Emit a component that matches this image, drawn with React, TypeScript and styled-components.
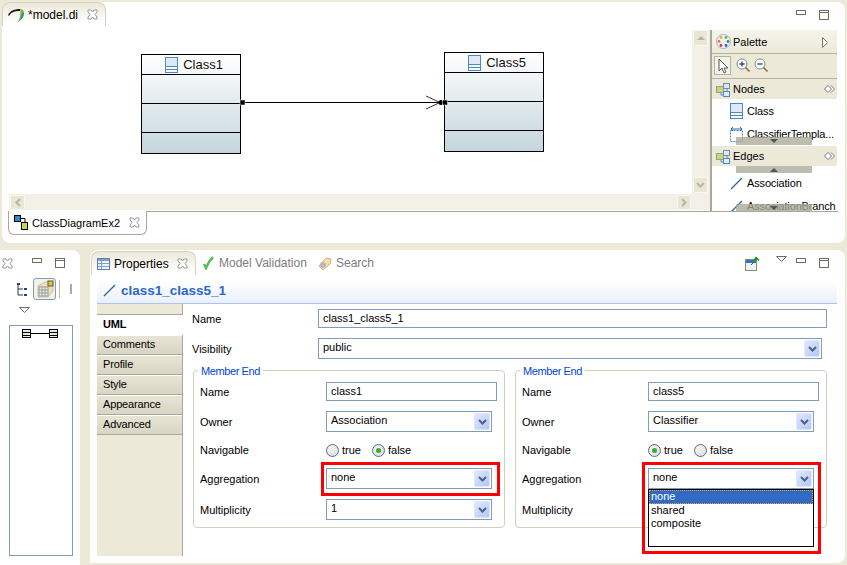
import React from "react";
import styled, { createGlobalStyle, css } from "styled-components";

const Global = createGlobalStyle`
  html, body { margin: 0; padding: 0; background: #ece9d8; }
  body { width: 847px; height: 565px; overflow: hidden; font-family: "Liberation Sans", Arial, sans-serif; font-size: 11px; color: #000; }
  * { box-sizing: border-box; }
`;

type Box = { $x: number; $y: number; $w?: number; $h?: number };
const place = css<Box>`
  position: absolute;
  left: ${(p) => p.$x}px;
  top: ${(p) => p.$y}px;
  ${(p) => (p.$w !== undefined ? `width: ${p.$w}px;` : "")}
  ${(p) => (p.$h !== undefined ? `height: ${p.$h}px;` : "")}
`;

const Page = styled.div`
  position: relative;
  width: 847px;
  height: 565px;
  background: #ece9d8;
  overflow: hidden;
`;
const Panel = styled.div<Box & { $radius: string }>`
  ${place}
  background: #fff;
  border-radius: ${(p) => p.$radius};
`;
const ViewTab = styled.div<Box & { $muted?: boolean }>`
  ${place}
  display: flex;
  align-items: center;
  gap: 4px;
  font-size: 12px;
  color: ${(p) => (p.$muted ? "#7d7d7d" : "#000")};
  white-space: nowrap;
`;
const ActiveTab = styled(ViewTab)`
  background: linear-gradient(#ece9d8, #fff 90%);
  border: 1px solid #d5d2c2;
  border-bottom: 0;
  border-radius: 8px 8px 0 0;
  padding-left: 5px;
`;
const BottomTab = styled(ViewTab)`
  background: #fff;
  border: 1px solid #aca899;
  border-top: 0;
  border-radius: 0 0 6px 6px;
  padding-left: 5px;
  gap: 3px;
  font-size: 11px;
`;
const TabClose = styled.span<{ $gap: number }>`
  display: flex;
  margin-left: ${(p) => p.$gap}px;
`;
const Rule = styled.div<Box & { $color: string }>`
  ${place}
  background: ${(p) => p.$color};
`;

const ClassBox = styled.div<Box>`
  ${place}
  width: 100px;
  height: 100px;
  border: 1px solid #000;
  background: linear-gradient(#fff, #c4d6dc);
`;
const ClassHead = styled.div`
  position: absolute;
  left: 0;
  right: 0;
  top: 0;
  height: 20px;
  border-bottom: 1px solid #000;
  display: flex;
  align-items: center;
  justify-content: center;
  gap: 5px;
  padding-left: 6px;
  color: #111;
  font-size: 13px;
`;
const ClassLine = styled.div<{ $top: number }>`
  position: absolute;
  left: 0;
  right: 0;
  top: ${(p) => p.$top}px;
  height: 1px;
  background: #000;
`;
const Drawing = styled.svg<Box>`
  ${place}
  display: block;
  overflow: visible;
`;

const ScrollTrack = styled.div<Box>`
  ${place}
  background: #f3f1e7;
`;
const ScrollButton = styled.div<Box>`
  ${place}
  background: #e9e6d6;
  border: 1px solid #f8f7f0;
  border-radius: 2px;
  display: flex;
  align-items: center;
  justify-content: center;
`;

const PaletteBar = styled.div<Box & { $bg: string }>`
  ${place}
  background: ${(p) => p.$bg};
  display: flex;
  align-items: center;
  gap: 2px;
  padding-left: 4px;
  font-size: 11px;
`;
const PaletteItem = styled.div<Box>`
  ${place}
  display: flex;
  align-items: center;
  gap: 4px;
  font-size: 11px;
  letter-spacing: -0.15px;
  white-space: nowrap;
`;
const PaletteScroll = styled.div<Box>`
  ${place}
  background: rgba(172, 168, 153, 0.78);
  display: flex;
  align-items: center;
  justify-content: center;
`;
const Tri = styled.div<{ $up?: boolean; $color?: string }>`
  width: 0;
  height: 0;
  border-left: 4px solid transparent;
  border-right: 4px solid transparent;
  ${(p) => (p.$up ? `border-bottom: 4px solid ${p.$color || "#555"};` : `border-top: 4px solid ${p.$color || "#555"};`)}
`;

const TitleBar = styled.div<Box>`
  ${place}
  background: linear-gradient(#fff 15%, #e9f0fb);
  border-bottom: 1px solid #a9c5f0;
  display: flex;
  align-items: center;
  gap: 5px;
  padding-left: 6px;
  color: #2c66c4;
  font-weight: 700;
  font-size: 13.5px;
`;
const SideTabs = styled.div<Box>`
  ${place}
  background: #ece9d8;
  border-right: 1px solid #aca899;
  display: flex;
  flex-direction: column;
  padding-top: 10px;
`;
const SideTab = styled.div<{ $active?: boolean }>`
  height: 20px;
  padding: 0 0 3px 6px;
  display: flex;
  align-items: center;
  font-size: 11px;
  letter-spacing: -0.15px;
  color: #000;
  ${(p) =>
    p.$active
      ? `background:#fff; font-weight:700; border-top:1px solid #aca899; height:21px; margin-right:-1px;`
      : `background: linear-gradient(#e7e4d3,#d8d5c4); border-top:1px solid #fff; border-bottom:1px solid #aca899;`}
`;
const SideFill = styled.div`
  flex: 1;
  background: #ece9d8;
`;
const Label = styled.div<Box>`
  ${place}
  font-size: 11px;
  line-height: 14px;
  white-space: nowrap;
`;
const TextField = styled.div<Box>`
  ${place}
  height: 19px;
  background: #fff;
  border: 1px solid #7f9db9;
  padding-left: 4px;
  font-size: 11px;
  line-height: 17px;
  white-space: nowrap;
`;
const ComboBox = styled.div<Box>`
  ${place}
  height: 21px;
  background: #fff;
  border: 1px solid #7f9db9;
  padding-left: 4px;
  font-size: 11px;
  line-height: 16px;
`;
const ComboButton = styled.div`
  position: absolute;
  right: 1px;
  top: 1px;
  width: 16px;
  height: 17px;
  background: linear-gradient(135deg, #e0e8fd, #b3c7f5);
  border: 1px solid #dfe7fb;
  border-radius: 2px;
  display: flex;
  align-items: center;
  justify-content: center;
`;
const GroupFrame = styled.div<Box>`
  ${place}
  border: 1px solid #d0d0bf;
  border-radius: 4px;
`;
const GroupTitle = styled.div`
  position: absolute;
  left: 4px;
  top: -7px;
  padding: 0 3px;
  background: #fff;
  color: #0046d5;
  font-size: 11px;
  line-height: 14px;
  letter-spacing: -0.4px;
`;
const RadioRow = styled.div<Box>`
  ${place}
  display: flex;
  align-items: center;
  gap: 3px;
  font-size: 11px;
  height: 14px;
`;
const RadioCircle = styled.div<{ $on?: boolean; $gap?: boolean }>`
  width: 13px;
  height: 13px;
  border-radius: 50%;
  border: 1px solid #4a6f96;
  background: radial-gradient(circle at 35% 30%, #f5f5f0, #dcdcd2);
  display: flex;
  align-items: center;
  justify-content: center;
  margin-left: ${(p) => (p.$gap ? "8px" : "0")};
  &::after {
    content: "";
    width: 5px;
    height: 5px;
    border-radius: 50%;
    background: ${(p) => (p.$on ? "#3aa83a" : "transparent")};
  }
`;
const RedFrame = styled.div<Box>`
  ${place}
  border: 3px solid #ff0000;
`;
const DropList = styled.div<Box>`
  ${place}
  background: #fff;
  border: 1px solid #000;
  font-size: 11px;
  line-height: 13px;
`;
const DropItem = styled.div<{ $selected?: boolean }>`
  height: 13px;
  padding-left: 2px;
  ${(p) => (p.$selected ? "background:#316ac5;color:#fff;outline:1px dotted #e8a33d;outline-offset:-1px;height:14px;" : "")}
`;
const OutlineBox = styled.div<Box>`
  ${place}
  border: 1px solid #7f9db9;
  background: #fff;
`;
const ToggleBtn = styled.div<Box>`
  ${place}
  border: 1px solid #7f9db9;
  border-radius: 3px;
  background: #f3f2ea;
`;

const ClassIcon = () => (
  <svg width="13" height="16" viewBox="0 0 13 16" style={{ flex: "none" }}>
    <rect x=".5" y=".5" width="12" height="15" fill="#f4f8fc" stroke="#4f87c0" />
    <rect x="1" y="1" width="11" height="8" fill="#dfe9f4" />
    <path d="M1 9.500h11M1 12.500h11" stroke="#4f87c0" />
  </svg>
);
const closePath = "M1 1l3 0 1.500 2L7 1h3v2L8 5.500l2 2.500v2H7L5.500 8 4 10H1V8l2-2.500L1 3z";
const Close = () => (
  <svg width="11" height="11" viewBox="0 0 11 11" style={{ flex: "none" }}>
    <path d={closePath} fill="#fff" stroke="#999" />
  </svg>
);
const Minimize = ({ x, y }: { x: number; y: number }) => (
  <Drawing $x={x} $y={y} $w={10} $h={5} viewBox="0 0 10 5">
    <rect x=".5" y=".5" width="9" height="4" fill="#fff" stroke="#6e6e5e" />
  </Drawing>
);
const Maximize = ({ x, y }: { x: number; y: number }) => (
  <Drawing $x={x} $y={y} $w={10} $h={10} viewBox="0 0 10 10">
    <rect x=".5" y=".5" width="9" height="9" fill="#fff" stroke="#6e6e5e" />
    <path d="M0 2.500h10" stroke="#6e6e5e" />
  </Drawing>
);
const ChevronDown = ({ color = "#4d6185" }: { color?: string }) => (
  <svg width="9" height="6" viewBox="0 0 9 6">
    <path d="M1 1l3.500 3.500L8 1" fill="none" stroke={color} strokeWidth="2" />
  </svg>
);
const ChevronSide = ({ left }: { left?: boolean }) => (
  <svg width="6" height="9" viewBox="0 0 6 9">
    <path d={left ? "M5 1L1.500 4.500 5 8" : "M1 1l3.500 3.500L1 8"} fill="none" stroke="#b8b5a6" strokeWidth="2" />
  </svg>
);
const FolderPair = () => (
  <svg width="15" height="15" viewBox="0 0 15 15" style={{ flex: "none" }}>
    <path d="M11 6v3M5 10v3h3" fill="none" stroke="#4f87c0" />
    <rect x=".5" y="4.500" width="7" height="6" fill="#c9d86a" stroke="#8aa0a0" />
    <rect x="7.500" y="1.500" width="6" height="5" fill="#dfe9f4" stroke="#6a90b5" />
    <rect x="7.500" y="9.500" width="6" height="5" fill="#dfe9f4" stroke="#4f87c0" />
  </svg>
);
const LineIcon = () => (
  <svg width="13" height="13" viewBox="0 0 13 13" style={{ flex: "none" }}>
    <path d="M1 12L12 1" stroke="#2a62a8" strokeWidth="1.200" />
  </svg>
);
const Combo = ({ x, y, w, text }: { x: number; y: number; w: number; text: string }) => (
  <ComboBox $x={x} $y={y} $w={w}>
    {text}
    <ComboButton>
      <ChevronDown />
    </ComboButton>
  </ComboBox>
);

const MemberEnd = ({ x, name, owner, nav, multiplicity }: { x: number; name: string; owner: string; nav: boolean; multiplicity?: string }) => (
  <>
    <GroupFrame $x={x} $y={370} $w={312} $h={158}>
      <GroupTitle>Member End</GroupTitle>
    </GroupFrame>
    <Label $x={x + 7} $y={385}>Name</Label>
    <TextField $x={x + 133} $y={382} $w={171}>{name}</TextField>
    <Label $x={x + 7} $y={415}>Owner</Label>
    <Combo x={x + 133} y={411} w={166} text={owner} />
    <Label $x={x + 7} $y={443}>Navigable</Label>
    <RadioRow $x={x + 133} $y={443}>
      <RadioCircle $on={nav} /> true
      <RadioCircle $on={!nav} $gap /> false
    </RadioRow>
    <Label $x={x + 7} $y={472}>Aggregation</Label>
    <Combo x={x + 133} y={468} w={166} text="none" />
    <Label $x={x + 7} $y={503}>Multiplicity</Label>
    {multiplicity && <Combo x={x + 133} y={499} w={166} text={multiplicity} />}
  </>
);

const Diamonds = ({ y }: { y: number }) => (
  <Drawing $x={824} $y={y} $w={11} $h={8} viewBox="0 0 11 8">
    <path d="M4 .500L.5 4 4 7.500 7.500 4zM7 .500L10.500 4 7 7.500" fill="#fff" stroke="#777" />
  </Drawing>
);

export default function App() {
  return (
    <Page>
      <Global />
      {/* Editor area */}
      <Panel $x={2} $y={2} $w={843} $h={241} $radius="8px" />
      <ActiveTab $x={2} $y={2} $w={104} $h={24}>
        <svg width="16" height="14" viewBox="0 0 16 14" style={{ flex: "none" }}>
          <path d="M0 7C2 3 6 1 12 1v2C7 3 3 4 1 8z" fill="#1a1a1a" />
          <path d="M12 1c3 0 4 2 4 4 0 4-3 7-6 9 2-4 3-8 2-13z" fill="#8cb81c" />
          <path d="M16 5c0 4-3 7-6 9 2-2 4-6 4-10z" fill="#1c8fc0" />
        </svg>
        *model.di
        <TabClose $gap={5}><Close /></TabClose>
      </ActiveTab>
      <Minimize x={796} y={10} />
      <Maximize x={819} y={10} />

      <ClassBox $x={141} $y={54}>
        <ClassHead><ClassIcon />Class1</ClassHead>
        <ClassLine $top={48} />
        <ClassLine $top={77} />
      </ClassBox>
      <ClassBox $x={444} $y={52}>
        <ClassHead><ClassIcon />Class5</ClassHead>
        <ClassLine $top={48} />
        <ClassLine $top={77} />
      </ClassBox>
      <Drawing $x={236} $y={92} $w={216} $h={20} viewBox="0 0 216 20">
        <path d="M6 10.500H204" stroke="#000" />
        <path d="M190 4l14 6.500-14 6.500" fill="none" stroke="#333" />
        <circle cx="205" cy="10.500" r="2.500" fill="#000" />
        <rect x="4" y="8" width="5" height="5" fill="#000" stroke="#fff" strokeWidth=".5" />
        <rect x="206.500" y="8" width="5" height="5" fill="#000" stroke="#fff" strokeWidth=".5" />
      </Drawing>

      <ScrollTrack $x={692} $y={30} $w={18} $h={180} />
      <ScrollButton $x={693} $y={30} $w={15} $h={16}><Tri $up $color="#b8b5a6" /></ScrollButton>
      <ScrollButton $x={693} $y={177} $w={15} $h={16}><ChevronDown color="#b8b5a6" /></ScrollButton>
      <ScrollTrack $x={9} $y={194} $w={683} $h={16} />
      <ScrollButton $x={10} $y={195} $w={15} $h={15}><ChevronSide left /></ScrollButton>
      <ScrollButton $x={677} $y={195} $w={14} $h={15}><ChevronSide /></ScrollButton>
      <Rule $x={710} $y={30} $w={2} $h={181} $color="#aca899" />

      <PaletteBar $x={712} $y={30} $w={125} $h={23} $bg="linear-gradient(#f6f5ec,#ece9d8)">
        <svg width="15" height="15" viewBox="0 0 15 15" style={{ flex: "none" }}>
          <circle cx="7.500" cy="7.500" r="7" fill="#eef1fb" stroke="#9fb0d8" />
          <circle cx="5" cy="3.500" r="1.400" fill="#f2b400" />
          <circle cx="10" cy="3.500" r="1.400" fill="#74b816" />
          <circle cx="3" cy="7.500" r="1.400" fill="#f07a10" />
          <circle cx="12" cy="7.500" r="1.400" fill="#2e9e2e" />
          <circle cx="5" cy="11.500" r="1.400" fill="#e03030" />
          <circle cx="10" cy="11.500" r="1.400" fill="#2a62c8" />
        </svg>
        Palette
      </PaletteBar>
      <Drawing $x={822} $y={37} $w={7} $h={11} viewBox="0 0 7 11">
        <path d="M.5.500l5 5-5 5z" fill="#fff" stroke="#777" />
      </Drawing>
      <Rule $x={712} $y={53} $w={125} $h={25} $color="#ece9d8" />
      <Rule $x={712} $y={53} $w={125} $h={1} $color="#b5b2a2" />
      <Rule $x={712} $y={78} $w={125} $h={1} $color="#b5b2a2" />
      <Drawing $x={714} $y={56} $w={58} $h={20} viewBox="0 0 58 20">
        <rect x=".5" y=".5" width="16" height="18" fill="#f4f3ea" stroke="#b5b2a2" />
        <path d="M5 3v12l3-3 2 5 2-1-2-4h4z" fill="#fff" stroke="#555" />
        <circle cx="28" cy="8" r="5" fill="#fff" stroke="#8a8a7a" />
        <path d="M25.500 8h5M28 5.500v5" stroke="#2a4fb0" strokeWidth="1.400" />
        <path d="M31.500 11.500l4 4" stroke="#8a6a3a" strokeWidth="1.600" />
        <circle cx="46" cy="8" r="5" fill="#fff" stroke="#8a8a7a" />
        <path d="M43.500 8h5" stroke="#2a4fb0" strokeWidth="1.400" />
        <path d="M49.500 11.500l4 4" stroke="#8a6a3a" strokeWidth="1.600" />
      </Drawing>
      <PaletteBar $x={712} $y={79} $w={125} $h={20} $bg="#ece9d8"><FolderPair />Nodes</PaletteBar>
      <Diamonds y={85} />
      <PaletteItem $x={730} $y={103} $h={16}><ClassIcon />Class</PaletteItem>
      <PaletteItem $x={730} $y={126} $h={16}>
        <svg width="13" height="16" viewBox="0 0 13 16" style={{ flex: "none" }}>
          <rect x=".5" y="4.500" width="12" height="11" fill="#fff" stroke="#4f87c0" strokeDasharray="2 1" />
          <path d="M1 3h11M3 1L1 3l2 2M10 1l2 2-2 2" fill="none" stroke="#2a62a8" />
        </svg>
        ClassifierTempla...
      </PaletteItem>
      <PaletteScroll $x={736} $y={137} $w={76} $h={8}><Tri $color="#555" /></PaletteScroll>
      <PaletteBar $x={712} $y={146} $w={125} $h={20} $bg="#ece9d8"><FolderPair />Edges</PaletteBar>
      <Diamonds y={152} />
      <PaletteItem $x={730} $y={175} $h={16}><LineIcon />Association</PaletteItem>
      <PaletteItem $x={730} $y={198} $h={16}><LineIcon />AssociationBranch</PaletteItem>
      <PaletteScroll $x={736} $y={166} $w={76} $h={7}><Tri $up $color="#555" /></PaletteScroll>
      <PaletteScroll $x={736} $y={204} $w={76} $h={8}><Tri $color="#555" /></PaletteScroll>
      <Rule $x={712} $y={212} $w={125} $h={20} $color="#fff" />
      <Rule $x={8} $y={211} $w={830} $h={1} $color="#aca899" />

      <BottomTab $x={8} $y={211} $w={139} $h={24}>
        <svg width="15" height="15" viewBox="0 0 15 15" style={{ flex: "none" }}>
          <rect x=".5" y=".5" width="6" height="6" fill="#2a8fc0" stroke="#000" />
          <rect x="7.500" y="7.500" width="6" height="7" fill="#c8d840" stroke="#000" />
          <path d="M7 3.500h4V8" fill="none" stroke="#000" />
        </svg>
        ClassDiagramEx2
        <TabClose $gap={6}><Close /></TabClose>
      </BottomTab>

      {/* Left view */}
      <Panel $x={0} $y={250} $w={80} $h={315} $radius="0 8px 0 0" />
      <Drawing $x={2} $y={258} $w={11} $h={11} viewBox="0 0 11 11">
        <path d={closePath} fill="#fff" stroke="#999" />
      </Drawing>
      <Minimize x={32} y={258} />
      <Maximize x={55} y={258} />
      <Drawing $x={16} $y={282} $w={12} $h={16} viewBox="0 0 12 16">
        <path d="M4 2H2v11h5M2 7h5" fill="none" stroke="#333" />
        <rect x="1" y="1" width="3" height="2" fill="#1f3f8f" />
        <rect x="8" y="6" width="3" height="2" fill="#1f3f8f" />
        <rect x="8" y="12" width="3" height="2" fill="#1f3f8f" />
      </Drawing>
      <ToggleBtn $x={33} $y={278} $w={23} $h={22} />
      <Drawing $x={36} $y={280} $w={18} $h={18} viewBox="0 0 18 18">
        <path d="M2 6L9 2h8v9l-5 6H2z" fill="#e8e2b8" stroke="#c8c2a0" />
        <rect x="3" y="7" width="9" height="9" fill="#eee" stroke="#999" />
        <path d="M3 10h9M3 13h9M6 7v9M9 7v9" stroke="#999" />
        <rect x="12" y="1" width="5" height="5" fill="#e8c820" stroke="#555" />
      </Drawing>
      <Rule $x={59} $y={280} $w={1} $h={18} $color="#bdbaa8" />
      <Rule $x={70} $y={284} $w={2} $h={10} $color="#aaa" />
      <Drawing $x={19} $y={307} $w={11} $h={6} viewBox="0 0 11 6">
        <path d="M.5.500h10L5.500 5.500z" fill="#fff" stroke="#6e6e5e" />
      </Drawing>
      <OutlineBox $x={9} $y={325} $w={64} $h={231} />
      <Drawing $x={22} $y={328} $w={37} $h={11} viewBox="0 0 37 11">
        <path d="M9 5.500h20" stroke="#000" />
        <rect x=".5" y="1.500" width="8" height="8" fill="#e8e8e8" stroke="#000" />
        <path d="M1 4.500h8M1 7.500h8" stroke="#000" />
        <rect x="27.500" y="1.500" width="8" height="8" fill="#e8e8e8" stroke="#000" />
        <path d="M28 4.500h8M28 7.500h8" stroke="#000" />
      </Drawing>

      {/* Properties view */}
      <Panel $x={90} $y={250} $w={755} $h={313} $radius="8px 8px 8px 0" />
      <ActiveTab $x={91} $y={251} $w={105} $h={24}>
        <svg width="13" height="12" viewBox="0 0 13 12" style={{ flex: "none" }}>
          <rect x=".5" y=".5" width="12" height="11" fill="#eef3fb" stroke="#5a7fb0" />
          <rect x="1" y="1" width="11" height="2" fill="#7f9fd0" />
          <path d="M1 5.500h11M1 8.500h11M4.500 3v8" stroke="#7f9fd0" />
        </svg>
        Properties
        <TabClose $gap={4}><Close /></TabClose>
      </ActiveTab>
      <ViewTab $x={202} $y={255} $h={16} $muted>
        <svg width="13" height="14" viewBox="0 0 13 14" style={{ flex: "none" }}>
          <path d="M2 8l2 4c2-5 4-8 7-11" fill="none" stroke="#55c055" strokeWidth="2.500" />
        </svg>
        Model Validation
      </ViewTab>
      <ViewTab $x={317} $y={255} $h={16} $muted>
        <svg width="15" height="15" viewBox="0 0 15 15" style={{ flex: "none" }}>
          <path d="M2 10L9 2l5 1-1 5-7 6z" fill="#f3dfb0" stroke="#d8b070" />
          <circle cx="6" cy="9" r="3" fill="#b8b8b8" />
        </svg>
        Search
      </ViewTab>
      <Drawing $x={745} $y={256} $w={15} $h={15} viewBox="0 0 15 15">
        <rect x=".5" y="3.500" width="11" height="11" fill="#eaf3fb" stroke="#8a8a70" />
        <rect x="1" y="4" width="10" height="3" fill="#3a70c0" />
        <path d="M6 9l3-3" stroke="#2a7a2a" />
        <path d="M9 5l3-3" stroke="#2a9a2a" strokeWidth="3" fill="none" />
        <path d="M10.500 1l3.500 3.500" stroke="#1f7f1f" strokeWidth="1.500" />
      </Drawing>
      <Drawing $x={776} $y={256} $w={11} $h={6} viewBox="0 0 11 6">
        <path d="M.5.500h10L5.500 5.500z" fill="#fff" stroke="#6e6e5e" />
      </Drawing>
      <Minimize x={796} y={258} />
      <Maximize x={819} y={258} />
      <TitleBar $x={97} $y={277} $w={740} $h={27}>
        <LineIcon />
        class1_class5_1
      </TitleBar>
      <SideTabs $x={97} $y={304} $w={86} $h={252}>
        <SideTab $active>UML</SideTab>
        <SideTab>Comments</SideTab>
        <SideTab>Profile</SideTab>
        <SideTab>Style</SideTab>
        <SideTab>Appearance</SideTab>
        <SideTab>Advanced</SideTab>
        <SideFill />
      </SideTabs>
      <Label $x={192} $y={312}>Name</Label>
      <TextField $x={318} $y={309} $w={509}>class1_class5_1</TextField>
      <Label $x={192} $y={342}>Visibility</Label>
      <Combo x={318} y={338} w={504} text="public" />

      <MemberEnd x={193} name="class1" owner="Association" nav={false} multiplicity="1" />
      <MemberEnd x={515} name="class5" owner="Classifier" nav={true} />

      <RedFrame $x={321} $y={462} $w={179} $h={34} />
      <RedFrame $x={642} $y={462} $w={179} $h={92} />
      <DropList $x={648} $y={489} $w={166} $h={58}>
        <DropItem $selected>none</DropItem>
        <DropItem>shared</DropItem>
        <DropItem>composite</DropItem>
      </DropList>
    </Page>
  );
}
